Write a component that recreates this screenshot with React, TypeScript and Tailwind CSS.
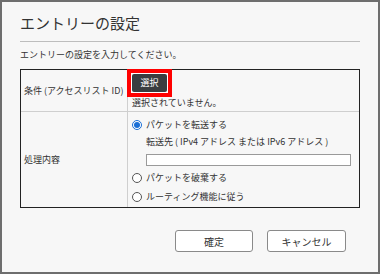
function Radio({ checked }: { checked?: boolean }) {
  return checked ? (
    <span className="flex h-[10px] w-[10px] shrink-0 items-center justify-center rounded-full border border-[#1a6fd6] bg-white">
      <span className="h-[6px] w-[6px] rounded-full bg-[#1a6fd6]" />
    </span>
  ) : (
    <span className="h-[10px] w-[10px] shrink-0 rounded-full border border-[#555] bg-white" />
  );
}

export default function App() {
  return (
    <div
      className="flex h-[274px] w-[380px] flex-col border-2 border-[#6e6e6e] bg-[#f7f7f7] px-[18px] text-[#333]"
      style={{ fontFamily: '"Noto Sans CJK JP", "Noto Sans", sans-serif' }}
    >
      <h1 className="mt-[11px] h-[20px] text-[15px] leading-[20px] font-normal text-[#333]">
        エントリーの設定
      </h1>
      <div className="mt-[8px] h-px bg-[#bdbdbd]" />
      <p className="mt-[7px] text-[9px] leading-[12px]">エントリーの設定を入力してください。</p>

      <div className="mt-[8px] border border-[#222] text-[9px] leading-[10px]">
        <div className="flex h-[42px] border-b border-[#cfcfcf]">
          <div className="flex w-[107px] shrink-0 items-center border-r border-[#cfcfcf] pl-[3px]">
            条件 (アクセスリスト ID)
          </div>
          <div className="flex flex-col">
            <span className="-mt-px -ml-px flex w-fit border-4 border-[#ff0000] bg-white p-px">
              <span className="flex h-[18px] w-[35px] items-center justify-center rounded-[2px] bg-[#3a3d40] text-white">
                選択
              </span>
            </span>
            <span className="mt-px pl-[4px]">選択されていません。</span>
          </div>
        </div>
        <div className="flex h-[95px]">
          <div className="flex w-[107px] shrink-0 items-center border-r border-[#cfcfcf] pl-[3px]">
            処理内容
          </div>
          <div className="flex flex-1 flex-col pt-[8px] pl-[4px]">
            <label className="flex h-[10px] items-center gap-[4px]">
              <Radio checked />
              パケットを転送する
            </label>
            <div className="mt-[7px] pl-[14px]">転送先 ( IPv4 アドレス または IPv6 アドレス )</div>
            <div className="mt-[7px] ml-[14px] h-[12px] w-[205px] border border-[#9a9a9a] bg-white" />
            <label className="mt-[7px] flex h-[10px] items-center gap-[4px]">
              <Radio />
              パケットを破棄する
            </label>
            <label className="mt-[9px] flex h-[10px] items-center gap-[4px]">
              <Radio />
              ルーティング機能に従う
            </label>
          </div>
        </div>
      </div>

      <div className="mt-[22px] flex justify-end gap-[14px] pr-[14px] text-[10px]">
        <button className="h-[22px] w-[78px] rounded-[3px] border border-[#8a8a8a] bg-white">確定</button>
        <button className="h-[22px] w-[79px] rounded-[3px] border border-[#8a8a8a] bg-white">キャンセル</button>
      </div>
    </div>
  );
}
